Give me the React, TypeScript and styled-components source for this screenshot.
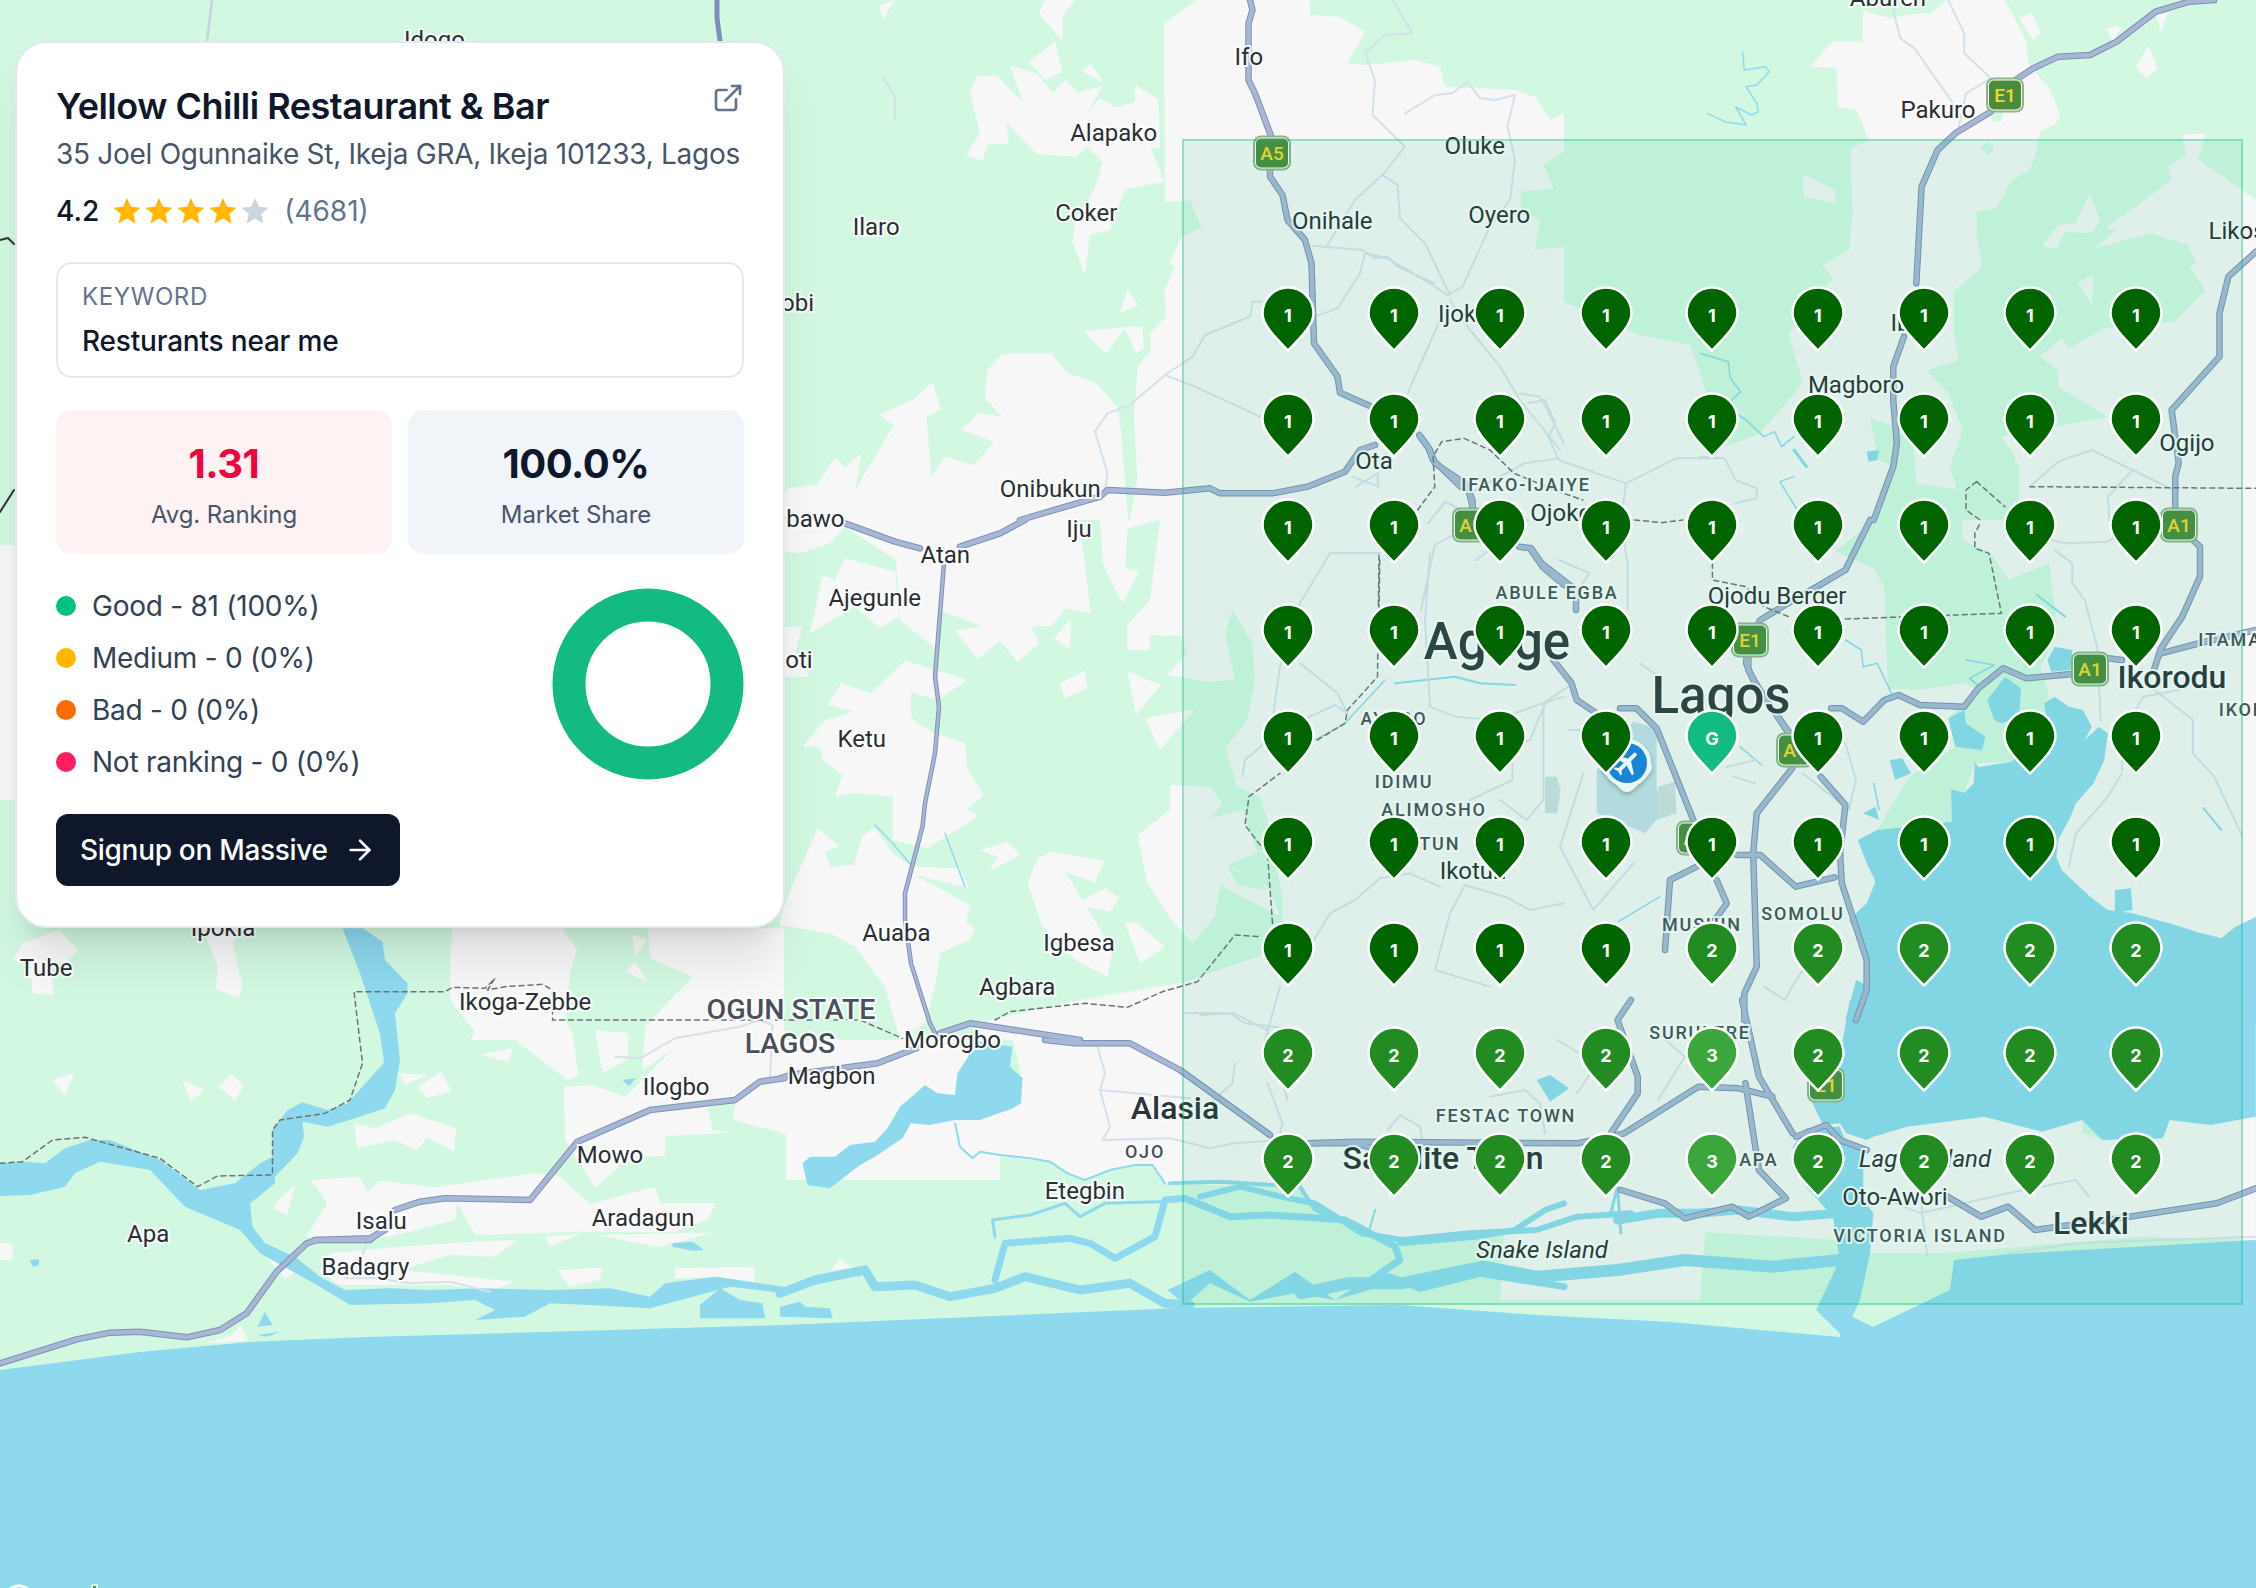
import React from "react";
import styled, { createGlobalStyle } from "styled-components";
import { ArrowRight, ExternalLink } from "lucide-react";

const K = 2256 / 1568;

// map pieces are traced per region; sx/sy is how much the region was enlarged when traced
type Region = {
  x: number;
  y: number;
  sx: number;
  sy: number;
  urban?: string[];
  mint?: string[];
  water?: string[];
  channels?: [number, string][];
  minor?: string[];
  highway?: string[];
  narrow?: string[];
  border?: string[];
};

const REGIONS: Region[] = [
  {
    x: 780, y: 0, sx: 2, sy: 3,
    urban: [
      "835,0 768,70 770,605 820,603 843,685 805,705 778,790 790,800 768,875 772,950 740,1000 742,1050 715,1100 708,1250 715,1440 700,1560 1568,1560 1568,340 1540,360 1510,290 1470,270 1330,260 1320,200 1270,180 1170,195 1135,190 1170,95 1120,50 1060,45 1060,0",
      "530,0 518,40 565,125 565,50 590,0",
      "200,15 230,0 205,60",
      "498,185 550,125 565,215 530,240",
      "372,465 400,400 380,280 395,225 435,228 487,310 460,197 515,222 545,280 570,240 597,278 645,257 615,340 640,295 672,322 710,305 710,255 757,298 760,440 742,445 768,545 690,568 660,690 620,705 610,825 585,725 590,670 630,565 645,485 615,440 592,470 513,462 452,365 457,430 415,435 405,482",
      "605,215 620,190 648,250",
      "695,870 717,915 680,938",
      "608,995 652,1062 690,985 712,1060 728,1045 725,980 695,980",
      "415,1110 445,1062 543,1060 575,1120 632,1148 675,1222 682,1290 696,1560 0,1560 0,1500 18,1465 75,1452 110,1372 130,1402 163,1360 150,1470 228,1275 198,1245 265,1200 305,1145 322,1228 293,1250 303,1430 330,1370 388,1395 428,1325 362,1290 398,1238 445,1250 410,1195",
    ],
    minor: [
      "205,230 230,290 230,360",
      "770,1125 700,1215 655,1240 630,1295 655,1420 650,1470",
      "770,1125 830,1160 960,1250",
      "770,1125 825,1070 850,1005 940,950 945,905 965,905",
      "1070,950 1115,925 1160,820 1170,760 1215,775 1300,850 1335,885 1365,860 1420,680",
      "1065,737 1165,750 1190,775 1215,770 1235,800 1310,850",
      "1095,735 1150,600 1205,525 1235,555 1240,655 1290,730 1340,885",
      "1205,525 1250,440 1185,345 1190,240 1170,160 1210,105 1265,100 1225,0",
      "1250,340 1310,285 1345,280 1375,245 1400,295 1430,300 1470,285 1455,380 1470,480 1460,600 1420,680",
      "1255,1180 1320,960",
      "1340,900 1380,990 1440,1100 1480,1200 1560,1350",
      "1480,1180 1520,1190 1535,1230 1568,1330",
    ],
    highway: [
      "940,0 945,30 937,70 937,240 950,280 985,420",
      "980,500 980,530 1005,585 1015,660 1050,720 1063,790 1068,1030 1115,1130 1120,1178 1180,1218",
      "1280,1310 1300,1350 1310,1390 1370,1450 1385,1500 1385,1560",
      "1190,1335 1160,1350 1130,1415 1055,1460 985,1480 880,1480 860,1465 770,1478 655,1470 640,1490 480,1560",
    ],
  },
  {
    x: 780, y: 520, sx: 2, sy: 3,
    urban: [
      "10,0 590,0 605,80 622,282 572,265 543,318 503,320 518,372 475,425 440,362 395,418 350,330 405,318 345,285 315,270 320,380 310,385 240,300 232,120 130,20 100,70 40,100 10,95",
      "60,340 85,165 110,180 130,115 230,155 238,290 200,325 150,260",
      "10,320 45,318 30,400 60,470 10,470",
      "95,555 122,490 182,520 250,422 375,480 315,540 262,515 262,590 270,605 310,640 370,670 375,750 408,825 373,870 398,888 295,985 225,960 225,830 150,820 110,830 125,765 85,720 80,680 45,680 90,600 148,575",
      "0,1200 15,1130 75,925 118,978 90,998 100,1042 148,1035 165,945 190,925 225,1000 265,1040 360,1045 378,1105 270,1065 380,1155 372,1205 390,1225 380,1258 320,1300 310,1400 290,1510 240,1560 210,1400 150,1280 100,1240 0,1215",
      "400,990 455,965 480,1005 418,1055 435,1010",
      "560,490 610,452 615,505 570,535",
      "548,355 582,295 580,390",
      "695,455 762,495 712,585",
      "730,595 830,568 760,690",
      "495,1090 515,1015 545,995 648,1022 630,1088 570,1055 605,1140 650,1105 678,1135 660,1175 612,1160 665,1290 655,1370 590,1320 525,1220",
      "715,945 780,870 780,795 860,800 885,850 862,895 925,870 955,1000 895,1035 958,1080 980,1110 1000,1190 880,1095 870,1190 825,1270 780,1195 735,1090",
      "690,1210 710,1205 770,1280 720,1330",
      "640,0 645,130 685,250 718,155 690,145 695,25 760,0",
      "760,0 740,240 695,315 695,390 740,390 740,345 800,348 815,395 775,465 855,485 910,480 890,340 905,270 945,370 950,480 935,600 890,685 915,800 960,830 975,900 1005,1130 1005,1210 965,1305 800,1390 600,1440 420,1500 380,1560 1568,1560 1568,0",
    ],
    mint: ["895,1040 958,1080 975,1110 915,1095"],
    channels: [
      [1.5, "190,915 225,970 265,1040"],
      [1.5, "330,940 370,1100"],
      [2, "1230,490 1350,470 1400,490 1470,495"],
      [1.5, "1210,480 1130,610 1070,660"],
    ],
    minor: [
      "1040,430 1115,520 1135,580 1110,555 1060,590 1000,630 930,720 925,770",
      "1320,1100 1260,1060 1200,1075 1150,1140 1100,1180 1060,1280",
      "1370,1095 1340,1180 1310,1350 1420,1400",
      "1370,1095 1450,1130 1500,1170 1568,1150",
      "1000,440 985,600",
      "1300,560 1350,590 1430,600 1525,550 1568,530",
      "1530,550 1500,660 1465,680 1465,780 1380,840",
      "810,1480 900,1480 930,1510 1040,1530",
      "1000,1400 970,1560",
      "1200,100 1100,100 1040,250 1000,440",
      "1300,100 1290,300 1300,560",
    ],
    highway: [
      "130,10 230,65 280,85",
      "360,80 440,40 490,0",
      "320,1540 380,1510 600,1560",
      "1500,85 1525,140 1568,195",
    ],
    narrow: [
      "328,130 320,280 310,470 318,560 310,700 290,850 285,920 250,1120 250,1200 262,1330 300,1510 310,1540",
    ],
    border: [
      "0,1500 160,1500 245,1555",
      "430,1500 460,1475 610,1450 695,1462 765,1415 835,1385 910,1245 960,1250",
      "985,1210 975,1000 955,965 930,915 938,830 1000,760",
      "1075,660 1130,610 1135,570 1195,470 1198,100",
    ],
  },
  {
    x: 780, y: 1040, sx: 2, sy: 3,
    urban: [
      "0,0 250,0 310,60 355,70 350,130 290,135 240,200 215,265 95,302 0,280",
      "465,0 485,120 470,205 400,240 378,330 440,350 540,365 570,400 610,420 650,395 720,375 745,375 770,430 800,435 1040,440 1070,520 1150,540 1235,620 1390,590 1460,570 1540,500 1568,480 1568,0",
      "100,690 120,655 145,685",
    ],
    water: [
      "385,0 465,20 460,80 485,115 482,190 465,205 400,240 350,240 300,255 262,250 245,295 190,350 160,375 100,445 55,435 45,370 60,350 110,350 140,315 190,305 215,265 240,200 290,135 315,160 350,165 355,100 385,30",
      "0,800 40,785 50,800 100,805 105,835 0,830",
      "860,690 940,780 1030,695 1110,780 1200,690 1190,745 1110,780 1030,760 940,785 860,730 810,795 775,750",
    ],
    channels: [
      [9, "0,760 70,720 170,690 190,740 270,735 340,770 430,745 490,710 600,750 700,730 770,790 820,795"],
      [7, "430,720 450,610 580,595 620,610 670,655 750,590 770,480 810,475 900,530 975,525 1040,530 1130,540 1230,620 1240,660 1200,700 1280,745 1400,700 1568,740"],
      [3, "430,590 425,540 500,525 570,490 600,530 650,490 760,485"],
      [4, "780,430 880,425 930,430 1040,440 1070,510 1130,545"],
      [6, "1240,610 1390,590 1470,570 1530,510 1568,490"],
      [2, "400,335 440,345 500,355 540,365 575,400 610,420 660,390 710,375 745,375 770,430"],
      [2, "350,250 360,320 385,355 400,335"],
    ],
    minor: [
      "635,20 650,100 640,150 660,260 645,300 780,295 860,325 910,310 1000,300",
      "640,150 820,175",
      "910,70 905,130 860,190",
      "975,130 1005,250 1000,280",
      "1215,270 1240,225 1280,260 1285,310",
      "1420,170 1490,150 1520,190 1530,280",
    ],
    highway: [
      "530,0 590,10 700,10 800,90 980,285",
      "1065,310 1150,310 1200,330",
      "280,20 195,70 20,105 0,115",
    ],
  },
  {
    x: 0, y: 900, sx: 2, sy: 3,
    urban: [
      "25,180 45,130 120,90 155,150 135,185 100,190 108,285 65,280 60,200",
      "405,85 480,85 465,130 485,255 478,293 432,268 435,200",
      "105,540 148,520 130,588",
      "365,540 410,570 382,603",
      "438,560 462,522 488,555 470,602",
      "798,520 855,525 810,555",
      "835,560 882,515 903,572 853,595",
      "708,670 750,685 820,640 912,685 908,755 855,712 833,752 790,720 715,745",
      "0,1030 25,1030 25,1080 0,1080",
      "550,910 590,855 575,942 550,930",
      "622,840 720,830 735,875 760,842 870,862 1070,820 1120,830 1180,912 1310,860 1320,910 1432,910 1415,960 1350,995 1165,995 950,1005 915,910 910,960 780,1010 612,1010 655,910",
      "1090,1010 1165,1000 1100,1037",
      "1195,1005 1425,998 1315,1042",
      "660,1060 800,1040 950,1025 1035,1020 990,1070 900,1065 800,1110 1030,1145 980,1175 900,1155 680,1155 640,1115",
      "1115,1110 1205,1103 1200,1140 1140,1160",
      "1350,1105 1508,1100 1510,1150 1440,1130 1350,1135",
      "535,1075 590,1115 570,1135",
      "480,1275 497,1322 410,1330 465,1305",
      "905,85 1125,85 1155,150 1140,220 1130,360 1145,400 1157,525 1135,540 1030,420 940,420 950,395 915,330 900,300 900,180",
      "1190,390 1257,400 1255,480 1205,518",
      "960,465 1025,445 1018,485",
      "1265,105 1295,120 1270,170",
      "1250,215 1270,185 1295,245",
      "1295,85 1568,85 1568,700 1466,660 1472,600 1415,625 1425,690 1460,698 1330,708 1330,768 1260,770 1190,865 1160,790 1130,720 1128,560 1185,555 1250,590 1345,450 1285,510 1290,380 1385,230 1300,175",
    ],
    water: [
      "685,85 725,85 765,125 770,180 815,250 815,280 790,340 800,480 790,570 770,625 710,655 655,680 605,665 608,710 595,760 550,830 550,850 500,910 505,980 530,1030 590,1070 640,1130 690,1170 780,1165 860,1170 960,1165 1100,1170 1220,1165 1300,1190 1330,1150 1430,1130 1568,1160 1568,1180 1460,1160 1300,1225 1180,1215 1100,1210 1050,1250 950,1260 990,1230 950,1200 860,1210 700,1215 640,1160 520,1060 480,990 370,920 300,810 200,785 150,820 130,860 60,885 0,888 0,790 50,785 90,790 130,745 180,720 220,720 320,780 400,870 470,850 520,790 545,770 545,690 575,630 605,607 655,630 695,610 768,488 760,400 720,220",
      "1245,540 1272,535 1258,558",
      "515,1280 530,1235 545,1275",
      "515,1305 560,1295 535,1310",
      "60,1080 78,1078 78,1095 65,1100",
      "1400,1215 1440,1165 1480,1200 1525,1210 1530,1255 1400,1255",
      "1345,1030 1385,1025 1408,1050 1385,1052 1345,1040",
    ],
    mint: ["412,885 440,875 475,915 485,947 440,925", "990,1205 1040,1195 1045,1235 1020,1235"],
    minor: [
      "1230,470 1280,475 1350,415 1480,380 1520,360 1545,375 1540,530",
      "735,1020 725,1065",
      "690,1135 750,1135 820,1150 900,1145 980,1175",
    ],
    highway: [
      "1568,535 1520,545 1470,600 1300,630 1155,725 1060,900 890,895 840,905 790,930",
      "765,990 740,1020 630,1020",
    ],
    border: [
      "0,790 45,785 105,720 170,712 320,775 395,860 435,828 545,825 545,690 560,660 650,640 700,600 725,490 708,275 890,275 905,262 970,265 990,235 975,270 1010,260 1085,253 1105,270 1105,360 1568,360",
    ],
  },
  {
    x: 0, y: 1200, sx: 3, sy: 3,
    highway: [
      "0,490 230,418 330,398 420,395 560,412 660,390 740,340 830,215 920,130 950,120 1110,115 1155,90",
    ],
  },
  {
    x: 1180, y: 130, sx: 2.904, sy: 3,
    mint: [
      "0,215 30,210 62,290 0,325",
      "1170,0 1568,0 1568,610 1480,640 1400,490 1370,380 1300,330 1245,370 1190,305 1110,350 1030,360 1045,270 990,240 990,185 1085,175 1055,105 1115,65 1150,115 1175,85",
    ],
    minor: [
      "1010,820 1060,810 1090,880 1070,920 1100,990 1295,1060 1440,985 1568,985",
      "840,1090 1000,1000 1100,985",
      "720,1180 770,1115 870,1170 740,1245 700,1440",
      "860,1290 1010,1170",
      "510,1070 575,1030 575,1070 500,1040",
      "1295,1060 1280,1180 1300,1300 1300,1440",
      "1100,1290 1190,1330 1140,1400",
    ],
    highway: [
      "695,915 720,950 735,990 815,1070",
      "840,1090 850,1130",
      "985,1250 1020,1255 1050,1300 1150,1380 1150,1440",
    ],
    border: [
      "690,1140 740,1070 735,980 760,935 825,925 900,960 970,1030 1100,1085 1170,1110",
      "1320,1170 1400,1178 1460,1170",
      "580,1290 578,1440",
    ],
  },
  {
    x: 1700, y: 0, sx: 2.82, sy: 3,
    urban: [
      "425,445 430,640 420,750 345,795 375,835 250,1000 290,1150 170,1300 0,1370 0,1560 480,1560 540,1400 510,1340 480,1255 600,1300 610,1450 725,1470 705,1400 740,1290 700,1180 640,1110 730,1080 715,1000 715,875 795,800 780,700 780,635 835,625 880,540 930,510 945,465 960,395 1005,370 1015,345 985,265 925,190 920,125 885,50 860,0 695,0 650,40 600,42 535,55 460,30 458,125 372,125 312,200 385,205 388,320 440,330 465,390 475,420",
      "292,522 380,570 382,610 292,590",
      "900,55 935,40 962,97 938,120",
      "1145,85 1190,77 1165,125",
      "1285,45 1320,40 1300,95",
      "1265,137 1290,205 1260,235 1230,200",
      "1360,405 1425,400 1405,478 1568,600 1568,1560 900,1560 900,1400 850,1310 1150,1250 1010,1160 1010,1110 958,1070 1020,1015 1042,1045 1140,985 1340,965 1425,870 1380,800 1400,790 1375,735 1270,700 1115,745 1175,690 1145,685 1330,540 1320,500 1370,465",
      "965,740 1010,675 1060,670 1100,580 1128,660 1105,700 1030,695 1005,745",
      "1065,850 1108,825 1105,915",
    ],
    mint: ["790,440 815,425 830,450 810,465", "815,340 855,335 850,365 825,365", "478,1255 530,1290 545,1400 505,1380", "855,1320 890,1370 855,1400 835,1350"],
    water: ["470,1355 505,1350 500,1380 475,1385"],
    channels: [
      [1.5, "120,155 125,210 185,200 195,215 160,255 130,260 160,310 165,335 145,345 100,320 130,375 70,365 20,340"],
      [1.5, "0,1060 80,1085 85,1135 115,1175 70,1220 130,1260 180,1310 210,1295 230,1340 265,1310"],
      [3, "265,1350 300,1400"],
      [1.5, "265,1430 225,1445 280,1540"],
    ],
    minor: [
      "545,30 565,115 605,145 720,320",
      "700,0 745,100 745,160 820,235 750,280 730,380",
      "930,1460 1010,1385 1105,1350 1220,1410 1335,1470",
      "1220,1410 1150,1490 1155,1560",
      "0,1370 70,1375 100,1440 160,1465 160,1495 100,1510",
    ],
    highway: [
      "1450,0 1380,5 1285,35 1175,125 1100,165 1010,170 940,205 890,240",
      "820,335 720,400 670,450 625,560 610,850",
      "575,1010 545,1100 545,1200 555,1330 545,1400 490,1560",
      "1340,1530 1340,1430 1350,1390 1330,1230 1465,1070 1465,940 1490,830 1568,755",
    ],
    border: ["930,1460 1568,1465", "780,1445 750,1470 750,1530 790,1560", "780,1445 860,1520"],
  },
  {
    x: 1700, y: 520, sx: 2.82, sy: 3,
    urban: ["0,0 1568,0 1568,1500 0,1500"],
    mint: [
      "380,95 490,145 520,205 530,505 620,510 740,490 780,505 700,595 720,680 590,770 500,930 710,905 708,808 745,818 775,730 880,725 1000,620 970,550 985,530 960,440 1010,340 985,130 870,180 820,100 740,60 740,0 490,0",
    ],
    water: [
      "445,960 500,930 710,905 708,808 745,818 772,790 775,725 785,742 880,725 980,610 970,550 1000,530 1040,560 1080,570 1105,620 1085,660 1125,620 1150,640 1140,720 1110,790 1060,850 1045,890 1010,960 1005,1010 1020,1050 1100,1130 1150,1170 1220,1180 1340,1215 1400,1235 1470,1255 1510,1220 1568,1190 1568,1500 410,1500 440,1380 480,1400 470,1300 420,1200 470,1150 495,1085 470,1030",
      "810,540 860,470 905,505 900,590 850,610 830,600",
      "700,595 745,570 750,610 805,650 795,690 720,680",
      "535,720 570,715 595,760 550,780",
      "1000,380 1050,390 1045,450 990,455 980,420",
      "460,880 495,860 505,900",
      "1170,1110 1215,1105 1220,1170 1170,1180",
    ],
    channels: [
      [1.5, "410,360 455,390 460,440 500,430 540,520"],
      [1.5, "750,420 830,435 760,475 790,500"],
      [2, "950,225 1030,290"],
      [2, "1420,865 1470,930"],
      [1.5, "490,790 505,870"],
    ],
    minor: [
      "1000,90 1050,130 1050,190 1085,240 1120,380 1130,600",
      "1270,500 1390,600 1390,700 1450,770 1530,950",
      "1190,760 1150,830 1060,940 1040,1040",
      "1350,510 1250,530 1190,640 1190,750",
      "990,60 1030,70 1150,65 1200,30",
      "410,670 440,780 420,870 290,760",
      "180,1400 240,1440 260,1400 320,1300",
    ],
    highway: [
      "370,565 400,565 460,605 520,540 560,525 620,555 745,560 785,505 855,445 920,475 1050,462",
      "1150,415 1190,420",
      "1300,400 1400,372 1568,330",
      "1280,450 1300,385 1360,290 1410,170 1410,80 1380,50",
      "480,0 410,150 330,200 240,255 170,300 135,370 130,430 150,480 250,640",
      "260,745 160,880 150,1000 160,1340 125,1420 125,1500",
      "340,770 410,855 395,1000 400,1090 470,1320 470,1410 440,1500",
      "105,1005 170,1005 270,1100 380,1072",
    ],
    border: [
      "35,130 35,180 130,200 180,260 250,290",
      "410,297 850,280 815,100 775,85 775,40 790,10",
    ],
  },
  {
    x: 1500, y: 650, sx: 3, sy: 3,
    minor: [
      "0,450 80,510 130,450 130,160 220,100",
      "205,240 295,240",
      "250,370 180,590 280,780 400,640",
      "680,350 770,330",
      "700,380 765,400",
      "490,90 420,40",
    ],
    channels: [[1.5, "720,290 785,345"], [1.5, "355,815 480,740"]],
    highway: [
      "160,30 215,100 230,150 290,190",
      "360,175 410,175 470,235 580,510",
      "745,0 745,60 790,140 870,250",
      "650,690 680,760 645,810",
      "590,650 510,690 495,900",
    ],
  },
  {
    x: 1200, y: 1000, sx: 1.485, sy: 3,
    urban: ["0,0 1568,0 1568,720 1400,710 1100,760 990,760 950,720 700,690 640,660 200,560 0,540"],
    mint: ["1000,350 1025,330 1035,375 1015,380", "1485,275 1510,275 1510,315 1490,315", "1310,350 1335,345 1340,420 1310,400", "900,900 950,1000 915,960"],
    water: [
      "965,0 1568,0 1568,350 1500,375 1440,360 1430,415 1340,420 1310,360 1250,395 1165,350 1050,380 1000,410 990,420 960,400 950,370 925,375 905,290 950,170",
      "880,440 900,385 950,380 960,430 985,440 985,600 1000,640 995,760 980,900 955,1010 915,930 950,780 940,650 900,560",
      "500,240 520,225 548,265 520,305",
    ],
    channels: [
      [6, "0,590 60,560 120,590 170,610 210,660 240,700 300,720 400,700 500,690 560,650 640,640"],
      [9, "620,660 680,640 740,640 800,630 880,650 950,640"],
      [12, "150,880 220,850 300,850 420,800 500,830 620,810 720,780 850,800 950,780"],
      [3, "610,640 620,560 625,700"],
      [2, "260,630 250,700"],
    ],
    minor: [
      "530,120 590,190 560,280",
      "0,45 50,40 100,90 130,300",
      "680,100 720,170 680,300",
      "1010,590 1070,640 1200,580 1300,540 1320,590",
      "1200,760 1300,730 1568,710",
      "1070,590 1080,770",
    ],
    highway: [
      "640,0 620,60 650,230 650,280 610,400",
      "160,430 230,425 560,430 630,400 740,260 800,265 850,290",
      "805,0 830,230 880,400",
      "625,570 690,610 720,655 790,620 815,650 870,595 830,510 810,250",
      "885,410 930,375 950,420 990,450",
      "1110,590 1160,650 1200,620 1240,690 1380,650 1510,610 1568,565",
    ],
  },
];

// things around the card that the regions above do not reach
const LOOSE_URBAN = [
  "1560,300 1640,335 1690,345 1730,460 1760,520 1700,1300 1500,1300",
  "0,545 16,545 16,800 0,800",
  "786,1040 1000,1040 1000,1180 786,1180",
];
const ATLANTIC =
  "0,1370 140,1352 249,1342 367,1337 784,1325 1180,1308 1400,1305 1537,1315 1671,1322 1840,1337 1845,1313 1873,1327 1950,1290 1954,1260 2010,1254 2256,1240 2256,1588 0,1588";

type LabelKind = "town" | "city" | "big" | "area" | "state" | "island";
type Label = [string, number, number, LabelKind?];

// positions measured on the 1568px wide view
const LABELS_SCALED: Label[] = [
  ["Idogo", 302, 27],
  ["Ifo", 868, 39],
  ["Alapako", 774, 92],
  ["Oluke", 1025, 101],
  ["Pakuro", 1347, 76],
  ["Onihale", 926, 153],
  ["Oyero", 1042, 149],
  ["Coker", 755, 147],
  ["Ilaro", 609, 157],
  ["Magboro", 1290, 267],
  ["Ota", 955, 320],
  ["Ogijo", 1520, 307],
  ["Onibukun", 730, 339],
  ["Iju", 750, 367],
  ["Atan", 657, 385],
  ["Ajegunle", 608, 415],
  ["Ketu", 599, 513],
  ["Tube", 32, 672],
  ["Auaba", 623, 648],
  ["Igbesa", 750, 655],
  ["Agbara", 707, 685],
  ["Ikoga-Zebbe", 365, 696],
  ["Morogbo", 662, 722],
  ["Magbon", 578, 747],
  ["Ilogbo", 470, 755],
  ["Etegbin", 754, 827],
  ["Mowo", 424, 802],
  ["Aradagun", 447, 846],
  ["Apa", 103, 857],
  ["Isalu", 265, 848],
  ["Badagry", 254, 880],
  ["Ilobi", 550, 210],
  ["Iloti", 551, 458],
  ["Obawo", 561, 360],
  ["Ipokia", 155, 644],
];

const LABELS_EXACT: Label[] = [
  ["Aburen", 1888, -3],
  ["Likosi", 2240, 230],
  ["Ijoko", 1464, 313],
  ["Ibafo", 1918, 322],
  ["IFAKO-IJAIYE", 1526, 484, "area"],
  ["Ojokoro", 1572, 512],
  ["ABULE EGBA", 1557, 592, "area"],
  ["Ojodu Berger", 1777, 595],
  ["Agege", 1497, 640, "big"],
  ["Lagos", 1721, 694, "big"],
  ["Ikorodu", 2172, 676, "city"],
  ["ITAMAGA", 2244, 639, "area"],
  ["IKORODU", 2263, 709, "area"],
  ["AYOBO", 1394, 718, "area"],
  ["IDIMU", 1404, 781, "area"],
  ["ALIMOSHO", 1434, 809, "area"],
  ["OKETUN", 1420, 843, "area"],
  ["Ikotun", 1473, 870],
  ["MUSHIN", 1702, 924, "area"],
  ["SOMOLU", 1803, 913, "area"],
  ["OGUN STATE", 791, 1009, "state"],
  ["LAGOS", 790, 1043, "state"],
  ["Alasia", 1175, 1107, "city"],
  ["OJO", 1145, 1151, "area"],
  ["FESTAC TOWN", 1506, 1115, "area"],
  ["SURULERE", 1700, 1032, "area"],
  ["Satellite Town", 1443, 1157, "city"],
  ["APAPA", 1746, 1159, "area"],
  ["Lagos Island", 1925, 1158, "island"],
  ["Oto-Awori", 1895, 1196],
  ["VICTORIA ISLAND", 1920, 1235, "area"],
  ["Lekki", 2091, 1222, "city"],
  ["Snake Island", 1542, 1249, "island"],
];

const SHIELDS: [string, number, number][] = [
  ["A5", 1272, 153],
  ["E1", 2005, 95],
  ["A1", 2179, 525],
  ["E1", 1750, 640],
  ["A1", 2090, 669],
  ["A1", 1471, 525],
  ["A1", 1795, 750],
  ["A1", 1695, 838],
  ["E1", 1826, 1085],
];

const LEGEND = [
  { color: "#00c27c", text: "Good - 81 (100%)" },
  { color: "#ffb800", text: "Medium - 0 (0%)" },
  { color: "#ff6b00", text: "Bad - 0 (0%)" },
  { color: "#ff2060", text: "Not ranking - 0 (0%)" },
];

const RANKS: (number | string)[][] = [
  [1, 1, 1, 1, 1, 1, 1, 1, 1],
  [1, 1, 1, 1, 1, 1, 1, 1, 1],
  [1, 1, 1, 1, 1, 1, 1, 1, 1],
  [1, 1, 1, 1, 1, 1, 1, 1, 1],
  [1, 1, 1, 1, "G", 1, 1, 1, 1],
  [1, 1, 1, 1, 1, 1, 1, 1, 1],
  [1, 1, 1, 1, 2, 2, 2, 2, 2],
  [2, 2, 2, 2, 3, 2, 2, 2, 2],
  [2, 2, 2, 2, 3, 2, 2, 2, 2],
];

const pinColor = (rank: number | string) => {
  if (rank === "G") return "#12bb82";
  if (rank === 1) return "#006400";
  if (rank === 2) return "#228b22";
  return "#3ca63c";
};

const GlobalStyle = createGlobalStyle`
  html, body {
    margin: 0;
    padding: 0;
    width: 2256px;
    height: 1588px;
    overflow: hidden;
    background: #d2f8e2;
    font-family: "Inter", "Liberation Sans", sans-serif;
  }
  * {
    box-sizing: border-box;
  }
`;

const MapCanvas = styled.div`
  position: relative;
  width: 2256px;
  height: 1588px;
  overflow: hidden;
  background: #d2f8e2;
`;

const MapDrawing = styled.svg`
  position: absolute;
  inset: 0;
  width: 2256px;
  height: 1588px;

  polyline,
  polygon {
    vector-effect: non-scaling-stroke;
  }
  polyline {
    fill: none;
    stroke-linejoin: round;
    stroke-linecap: round;
  }
`;

const kindStyle: Record<LabelKind, string> = {
  town: "font-size: 24px; font-weight: 400; color: #2a2f33;",
  city: "font-size: 32px; font-weight: 500; color: #2b3238;",
  big: "font-size: 51px; font-weight: 500; color: #2f3a3d;",
  area: "font-size: 18px; font-weight: 500; color: #454f55; letter-spacing: 1.8px;",
  state: "font-size: 28.5px; font-weight: 500; color: #4a4f5a;",
  island: "font-size: 24px; font-weight: 400; font-style: italic; color: #2a2f33;",
};

const PlaceLabel = styled.span.attrs<{ $x: number; $y: number }>((p) => ({
  style: { left: p.$x, top: p.$y + 1 },
}))<{ $x: number; $y: number; $kind: LabelKind }>`
  position: absolute;
  transform: translate(-50%, -50%);
  font-family: "Roboto", "Liberation Sans", sans-serif;
  white-space: nowrap;
  line-height: 1;
  -webkit-text-stroke: 4px rgba(255, 255, 255, 0.85);
  paint-order: stroke fill;
  ${(p) => kindStyle[p.$kind]}
`;

const RoadShield = styled.span.attrs<{ $x: number; $y: number }>((p) => ({
  style: { left: p.$x, top: p.$y },
}))<{ $x: number; $y: number }>`
  position: absolute;
  transform: translate(-50%, -50%);
  width: 36px;
  height: 33px;
  display: flex;
  align-items: center;
  justify-content: center;
  background: #4b8b3b;
  border: 2px solid #fff;
  outline: 2px solid #8eb487;
  outline-offset: -1px;
  border-radius: 7px;
  font-family: "Roboto", "Liberation Sans", sans-serif;
  font-size: 19px;
  font-weight: 500;
  color: #f3d92e;
`;

const SearchArea = styled.div`
  position: absolute;
  left: 1182px;
  top: 139px;
  width: 1061px;
  height: 1166px;
  background: rgba(16, 185, 129, 0.1);
  border: 2px solid rgba(16, 185, 129, 0.35);
`;

const PinGrid = styled.div`
  position: absolute;
  left: 1261px;
  top: 286px;
  display: grid;
  grid-template-columns: repeat(9, 106px);
  grid-auto-rows: 105.75px;
`;

const PinWrap = styled.div`
  position: relative;
  width: 54px;
  height: 66px;

  svg {
    display: block;
  }
`;

const PinText = styled.span`
  position: absolute;
  left: 0;
  right: 0;
  top: 19px;
  text-align: center;
  font-size: 18px;
  line-height: 22px;
  font-weight: 700;
  color: #fff;
`;

const Card = styled.section`
  position: absolute;
  left: 15px;
  top: 41px;
  width: 770px;
  padding: 39px 39px 40px;
  background: #fff;
  border: 2px solid #e2e8f0;
  border-radius: 32px;
  box-shadow: 0 40px 50px -10px rgba(0, 0, 0, 0.1), 0 16px 20px -12px rgba(0, 0, 0, 0.1);
`;

const CardHead = styled.div`
  display: flex;
  justify-content: space-between;
  align-items: flex-start;
`;

const Title = styled.h1`
  margin: 0;
  font-size: 36px;
  line-height: 48px;
  font-weight: 600;
  letter-spacing: -0.5px;
  color: #0f172a;
`;

const OpenLink = styled.a`
  display: block;
  width: 32px;
  height: 32px;
  color: #64748b;
`;

const Address = styled.p`
  margin: 4px 0 0;
  font-size: 28px;
  line-height: 40px;
  letter-spacing: -0.28px;
  color: #475569;
  white-space: nowrap;
`;

const RatingRow = styled.div`
  display: flex;
  align-items: center;
  margin-top: 17px;
  height: 40px;
  font-size: 28px;
`;

const RatingValue = styled.span`
  font-weight: 500;
  color: #0f172a;
  margin-right: 13px;
`;

const Stars = styled.div`
  display: flex;
  gap: 2px;
  margin-right: 14px;
`;

const Star = styled.svg<{ $on: boolean }>`
  width: 30px;
  height: 30px;
  fill: ${(p) => (p.$on ? "#ffb800" : "#cbd5e1")};
`;

const RatingCount = styled.span`
  color: #64748b;
`;

const KeywordBox = styled.div`
  margin-top: 31px;
  height: 116px;
  padding: 17px 24px 0;
  border: 2px solid #e2e8f0;
  border-radius: 16px;
`;

const KeywordLabel = styled.div`
  font-size: 24px;
  line-height: 32px;
  color: #64748b;
  text-transform: uppercase;
  letter-spacing: 0.6px;
`;

const KeywordValue = styled.div`
  margin-top: 8px;
  font-size: 28px;
  line-height: 40px;
  font-weight: 500;
  letter-spacing: -0.2px;
  color: #0f172a;
`;

const StatRow = styled.div`
  display: grid;
  grid-template-columns: 1fr 1fr;
  gap: 16px;
  margin-top: 32px;
`;

const StatBox = styled.div<{ $bg: string }>`
  height: 144px;
  padding-top: 26px;
  border-radius: 16px;
  background: ${(p) => p.$bg};
  text-align: center;
`;

const StatValue = styled.div<{ $color: string }>`
  font-size: 40px;
  line-height: 56px;
  font-weight: 700;
  letter-spacing: -0.5px;
  color: ${(p) => p.$color};
`;

const StatLabel = styled.div`
  margin-top: 7px;
  font-size: 24px;
  line-height: 32px;
  letter-spacing: -0.1px;
  color: #475569;
`;

const LowerRow = styled.div`
  display: flex;
  justify-content: space-between;
  align-items: flex-start;
  margin-top: 32px;
`;

const LegendColumn = styled.div`
  display: flex;
  flex-direction: column;
  align-items: flex-start;
`;

const LegendList = styled.ul`
  display: flex;
  flex-direction: column;
  gap: 12px;
  margin: 0;
  padding: 0;
  list-style: none;
`;

const LegendItem = styled.li`
  display: flex;
  align-items: center;
  gap: 16px;
  font-size: 28px;
  line-height: 40px;
  letter-spacing: -0.25px;
  color: #334155;
`;

const LegendDot = styled.span<{ $color: string }>`
  width: 20px;
  height: 20px;
  border-radius: 50%;
  background: ${(p) => p.$color};
`;

const SignupButton = styled.button`
  display: flex;
  align-items: center;
  gap: 16px;
  height: 72px;
  margin-top: 32px;
  padding: 0 24px;
  border: none;
  border-radius: 12px;
  background: #0f172a;
  color: #fff;
  font-family: inherit;
  font-size: 28px;
  font-weight: 500;
  letter-spacing: -0.3px;
`;

const Donut = styled.svg`
  display: block;
  width: 192px;
  height: 192px;
  margin-top: 2px;
`;

function MapLayers() {
  const layer = (
    key: keyof Region,
    render: (points: string, i: number) => React.ReactNode
  ) =>
    REGIONS.map((r, i) => {
      const items = r[key] as string[] | undefined;
      if (!items) return null;
      return (
        <g key={i} transform={`translate(${r.x} ${r.y}) scale(${1 / r.sx} ${1 / r.sy})`}>
          {items.map(render)}
        </g>
      );
    });

  return (
    <MapDrawing viewBox="0 0 2256 1588">
      <defs>
        <filter id="marker-shadow" x="-30%" y="-30%" width="160%" height="160%">
          <feDropShadow dx="0" dy="2" stdDeviation="2" floodOpacity="0.3" />
        </filter>
      </defs>
      {LOOSE_URBAN.map((p, i) => (
        <polygon key={i} points={p} fill="#f7f7f7" />
      ))}
      {layer("urban", (p, i) => (
        <polygon key={i} points={p} fill="#f7f7f7" />
      ))}
      {layer("mint", (p, i) => (
        <polygon key={i} points={p} fill="#d2f8e2" />
      ))}
      <polygon points={ATLANTIC} fill="#8fd9ef" />
      {layer("water", (p, i) => (
        <polygon key={i} points={p} fill="#8fd9ef" />
      ))}
      {REGIONS.map((r, i) =>
        r.channels ? (
          <g key={i} transform={`translate(${r.x} ${r.y}) scale(${1 / r.sx} ${1 / r.sy})`}>
            {r.channels.map(([w, p], j) => (
              <polyline key={j} points={p} stroke="#8fd9ef" strokeWidth={w} />
            ))}
          </g>
        ) : null
      )}
      <g transform="translate(1500 650) scale(0.3333)">
        <polygon points="290,360 400,215 470,235 470,420 495,480 435,550 290,490" fill="#c4deea" />
        <polygon points="135,380 170,380 182,420 172,490 135,490" fill="#cfdfe2" />
        <polygon points="475,410 525,395 530,490 470,510" fill="#cfdfe2" />
      </g>
      {layer("minor", (p, i) => (
        <polyline key={i} points={p} stroke="#d6e0ea" strokeWidth={2} />
      ))}
      {layer("highway", (p, i) => (
        <polyline key={i} points={p} stroke="#7d90b8" strokeWidth={6.5} />
      ))}
      {layer("narrow", (p, i) => (
        <polyline key={i} points={p} stroke="#7d90b8" strokeWidth={4.5} />
      ))}
      {layer("highway", (p, i) => (
        <polyline key={i} points={p} stroke="#a8b8d4" strokeWidth={4.5} />
      ))}
      {layer("narrow", (p, i) => (
        <polyline key={i} points={p} stroke="#a8b8d4" strokeWidth={2.5} />
      ))}
      {layer("border", (p, i) => (
        <polyline key={i} points={p} stroke="#6f7275" strokeWidth={1.5} strokeDasharray="5 4" strokeLinecap="butt" />
      ))}
      <polyline points="212,0 207,41" stroke="#c6d2e4" strokeWidth={2.5} />
      <polyline points="717,0 717,18 720,41" stroke="#7d90b8" strokeWidth={5} />
      <polyline points="0,240 8,238 14,244" stroke="#30343a" strokeWidth={2} />
      <polyline points="0,512 14,490" stroke="#30343a" strokeWidth={2} />
      <g filter="url(#marker-shadow)">
        <circle cx="1627" cy="763" r="24" fill="#fff" />
        <rect x="-20" y="-20" width="40" height="40" rx="8" fill="#fff" transform="translate(1627 767) rotate(45)" />
      </g>
      <circle cx="1627" cy="763" r="20" fill="#1a7fe0" />
      <path
        transform="translate(1611 747) scale(1.35) rotate(45 12 12)"
        fill="#fff"
        d="M21 16v-2l-8-5V3.5c0-.83-.67-1.5-1.5-1.5S10 2.67 10 3.5V9l-8 5v2l8-2.5V19l-2 1.5V22l3.5-1 3.5 1v-1.5L13 19v-5.5l8 2.5z"
      />
      <circle cx="19" cy="1600" r="14" fill="#4285f4" stroke="#fff" strokeWidth="3" />
      <rect x="92" y="1585" width="5" height="5" fill="#34a853" stroke="#fff" strokeWidth="1.5" />
    </MapDrawing>
  );
}

export default function App() {
  return (
    <>
      <GlobalStyle />
      <MapCanvas>
        <MapLayers />
        {LABELS_SCALED.map(([text, x, y, kind]) => (
          <PlaceLabel key={text} $x={x * K} $y={y * K} $kind={kind || "town"}>
            {text}
          </PlaceLabel>
        ))}
        {LABELS_EXACT.map(([text, x, y, kind]) => (
          <PlaceLabel key={text + x} $x={x} $y={y} $kind={kind || "town"}>
            {text}
          </PlaceLabel>
        ))}
        {SHIELDS.map(([text, x, y]) => (
          <RoadShield key={text + x} $x={x} $y={y}>
            {text}
          </RoadShield>
        ))}
        <SearchArea />
        <PinGrid>
          {RANKS.flat().map((rank, i) => (
            <PinWrap key={i}>
              <svg width="54" height="66" viewBox="0 0 54 66">
                <path
                  d="M27 1.5C13 1.5 1.5 13 1.5 27.5C1.5 40 17 54 27 64.5C37 54 52.5 40 52.5 27.5C52.5 13 41 1.5 27 1.5Z"
                  fill={pinColor(rank)}
                  stroke="#fff"
                  strokeWidth="2.5"
                />
              </svg>
              <PinText>{rank}</PinText>
            </PinWrap>
          ))}
        </PinGrid>
        <Card>
          <CardHead>
            <Title>Yellow Chilli Restaurant &amp; Bar</Title>
            <OpenLink>
              <ExternalLink size={32} strokeWidth={2} />
            </OpenLink>
          </CardHead>
          <Address>35 Joel Ogunnaike St, Ikeja GRA, Ikeja 101233, Lagos</Address>
          <RatingRow>
            <RatingValue>4.2</RatingValue>
            <Stars>
              {[1, 2, 3, 4, 5].map((n) => (
                <Star key={n} $on={n <= 4} viewBox="0 0 24 24">
                  <polygon points="12,1.5 15.1,8.6 22.8,9.4 17,14.4 18.7,22 12,18 5.3,22 7,14.4 1.2,9.4 8.9,8.6" />
                </Star>
              ))}
            </Stars>
            <RatingCount>(4681)</RatingCount>
          </RatingRow>
          <KeywordBox>
            <KeywordLabel>Keyword</KeywordLabel>
            <KeywordValue>Resturants near me</KeywordValue>
          </KeywordBox>
          <StatRow>
            <StatBox $bg="#fef2f2">
              <StatValue $color="#f0003c">1.31</StatValue>
              <StatLabel>Avg. Ranking</StatLabel>
            </StatBox>
            <StatBox $bg="#f1f5f9">
              <StatValue $color="#0f172a">100.0%</StatValue>
              <StatLabel>Market Share</StatLabel>
            </StatBox>
          </StatRow>
          <LowerRow>
            <LegendColumn>
              <LegendList>
                {LEGEND.map((item) => (
                  <LegendItem key={item.text}>
                    <LegendDot $color={item.color} />
                    {item.text}
                  </LegendItem>
                ))}
              </LegendList>
              <SignupButton>
                Signup on Massive
                <ArrowRight size={32} strokeWidth={2} />
              </SignupButton>
            </LegendColumn>
            <Donut viewBox="0 0 192 192">
              <circle cx="96" cy="96" r="79" fill="none" stroke="#13ba82" strokeWidth="33" />
            </Donut>
          </LowerRow>
        </Card>
      </MapCanvas>
    </>
  );
}
